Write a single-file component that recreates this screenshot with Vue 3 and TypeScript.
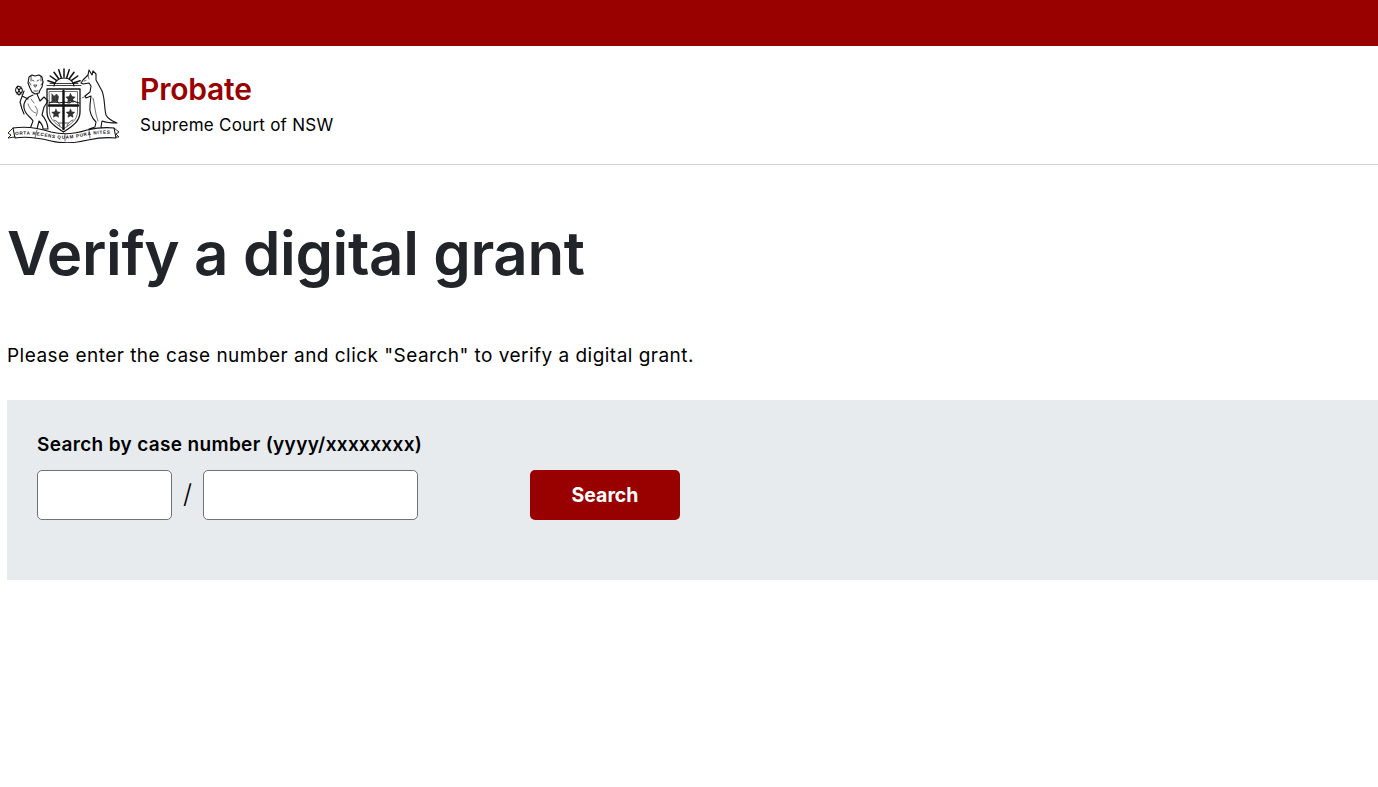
<script setup lang="ts">
import { ref } from "vue";

const caseYear = ref("");
const caseNumber = ref("");

const rays = [-72, -54, -36, -18, 0, 18, 36, 54, 72];
</script>

<template>
  <div class="page">
    <div class="top-bar"></div>

    <header class="site-header">
      <svg class="crest" viewBox="0 0 113 75" aria-label="NSW coat of arms" role="img">
        <defs>
          <path id="motto-line" d="M5 67.500C22 65 34 68 46 70c10 1.500 22 .5 32-2 10-2 20-3 31-1.500" />
        </defs>
        <g fill="none" stroke="#111" stroke-width="0.9" stroke-linecap="round" stroke-linejoin="round">
          <!-- sun -->
          <path d="M47 18a10 8 0 0 1 20 0" stroke-width="1.100" />
          <path d="M40 17.500h34M43 15.500h28" stroke-width="0.8" />
          <g v-for="r in rays" :key="r" :transform="`rotate(${r} 57 18)`">
            <path d="M57 9V1" stroke-width="1.500" />
          </g>
          <!-- shield -->
          <path d="M40 21h33v23c0 10-9 15-16.500 20C49 59 40 54 40 44z" fill="#fff" stroke-width="1.300" />
          <path d="M42.500 23.500h28V44c0 8-7.500 12.500-14 17-6.500-4.500-14-9-14-17z" stroke-width="0.6" />
          <path d="M56.500 23v38M42 37.500h29" stroke-width="2.400" />
          <path d="M42 35l6-2 4 2 5-1 5 1 4-2 6 2" stroke-width="1.200" />
          <path d="M45 26l2 2.500 2.500-2.500 2 2.500-1 6h-5.500zM47 28v5M50 28v5" fill="#444" stroke-width="0.5" />
          <path d="M63.500 25.500l1.500 3 3.200.5-2.300 2.300.5 3.200-2.900-1.500-2.900 1.500.5-3.200-2.300-2.300 3.200-.5z" fill="#333" stroke-width="0.4" />
          <path d="M49 41l1.300 2.800 3 .4-2.200 2.100.5 3-2.600-1.400-2.600 1.400.5-3-2.200-2.100 3-.4z" fill="#333" stroke-width="0.4" />
          <path d="M63.500 41l1.300 2.800 3 .4-2.200 2.100.5 3-2.600-1.400-2.600 1.400.5-3-2.200-2.100 3-.4z" fill="#333" stroke-width="0.4" />
          <path d="M47 52c3 1 5 3 6 6M66 52c-3 1-5 3-6 6M52 55h9" stroke-width="0.7" />
          <!-- lion -->
          <path d="M22 9l3-2 3 1 4-1 3 2 1 5-1 5-2 3-1 3-4 1-3-2-2-4-2-5z" fill="#fff" stroke-width="1.100" />
          <path d="M25 12l2 1M32 12l-2 1M27 17h3l-1.500 2zM24 8v5M34 8v5M22 14l2 3M36 14l-2 3M27 23h4" stroke-width="0.7" />
          <path d="M26 27c-6 2-10 7-9 13 1 7 7 9 9 13l-3 8h7l2-8c2 2 4 5 4 8h5c0-5-3-11-6-14l2-8 4-6-4-4-4 4-3-7" stroke-width="1.100" />
          <path d="M17 23l-4 11 2 7 2 5M11 18c-2 1-3 4-2 6l3 3 3-3c1-2 0-5-4-6zM10 19l4 7M14 19l-4 7M15 28l6 3" stroke-width="1.100" />
          <path d="M28 38c3 3 3 7 1 10M21 36c2 5 4 8 8 9M24 31l3 4" stroke-width="0.6" />
          <!-- kangaroo -->
          <path d="M82 2l-1 5-5 5-2 3 2 1 6-1 2 3-1 6-5 4 1 2 5-2-1 9c-1 8 2 13 6 17l-1 5-6 2h14l-2-2 1-6c5 2 11 2 15 2-5-2-9-4-11-8-2-8-1-17-4-24l-6-11 0-6-3-3-1 4z" fill="#fff" stroke-width="1.100" />
          <path d="M86 30c2 8 2 15 5 23M79 28l-4 2M81 7l1 4M77 13l2-.5" stroke-width="0.6" />
          <!-- scroll -->
          <path d="M6 60c13-2 26 0 38 4 12 3 24 2 36-2 9-2 18-3 27-2l2 10c-10-1-19 0-28 2-12 3-24 4-37 1-12-3-24-5-36-3z" fill="#fff" stroke-width="1.100" />
          <path d="M6 60l-5 5 3 2-3 3 7-1M107 60l5 4-3 2 3 3-3 0" stroke-width="0.9" />
          <path d="M30 62l-2 8M58 66v7M82 62l1 8" stroke-width="0.6" />
        </g>
        <text class="motto">
          <textPath href="#motto-line" startOffset="3">ORTA RECENS QUAM PURA NITES</textPath>
        </text>
      </svg>
      <div class="brand">
        <h2 class="brand-title">Probate</h2>
        <p class="brand-sub">Supreme Court of NSW</p>
      </div>
    </header>

    <main class="content">
      <h1 class="page-title">Verify a digital grant</h1>
      <p class="intro">Please enter the case number and click "Search" to verify a digital grant.</p>

      <form class="search-panel" @submit.prevent>
        <label class="search-label" for="case-year">Search by case number (yyyy/xxxxxxxx)</label>
        <div class="search-row">
          <input id="case-year" v-model="caseYear" class="field field-year" type="text" />
          <span class="slash">/</span>
          <input v-model="caseNumber" class="field field-number" type="text" />
          <button class="search-btn" type="submit">Search</button>
        </div>
      </form>
    </main>
  </div>
</template>

<style>
html,
body {
  background: #fff;
}
</style>

<style scoped>
.page {
  font-family: Inter, "Liberation Sans", sans-serif;
  color: #000;
  min-height: 787px;
}

.top-bar {
  height: 46px;
  background: #990000;
}

.site-header {
  display: flex;
  align-items: flex-start;
  height: 119px;
  padding: 22px 0 0 7px;
  box-sizing: border-box;
  border-bottom: 1px solid #d3d3d3;
}

.crest {
  width: 113px;
  height: 75px;
  flex: none;
}

.motto {
  font-family: "Liberation Sans", sans-serif;
  font-size: 4.600px;
  font-weight: 700;
  letter-spacing: 0.7px;
  fill: #111;
}

.brand {
  margin-left: 20px;
}

.brand-title {
  margin: 0;
  font-size: 30px;
  line-height: 44px;
  font-weight: 600;
  letter-spacing: -0.2px;
  color: #990000;
  transform: translateY(-1px);
}

.brand-sub {
  margin: 1px 0 0;
  font-size: 17px;
  line-height: 24px;
  letter-spacing: 0.25px;
  color: #000;
}

.content {
  padding: 0 0 0 7px;
}

.page-title {
  margin: 48px 0 0;
  font-size: 60px;
  line-height: 80px;
  font-weight: 600;
  letter-spacing: -0.35px;
  color: #212529;
}

.intro {
  margin: 50px 0 0;
  font-size: 19px;
  line-height: 26px;
  letter-spacing: 0.47px;
}

.search-panel {
  margin-top: 31px;
  height: 180px;
  box-sizing: border-box;
  padding: 32px 30px 0;
  background: #e7ebee;
}

.search-label {
  display: block;
  font-size: 19px;
  line-height: 26px;
  font-weight: 600;
  letter-spacing: 0.34px;
}

.search-row {
  display: flex;
  align-items: center;
  margin-top: 12px;
}

.field {
  height: 50px;
  box-sizing: border-box;
  border: 1px solid #6c757d;
  border-radius: 5px;
  background: #fff;
  padding: 0 10px;
  font: inherit;
}

.field-year {
  width: 135px;
}

.field-number {
  width: 215px;
}

.slash {
  width: 31px;
  text-align: center;
  font-size: 26px;
  font-weight: 300;
  margin-top: -4px;
}

.search-btn {
  width: 150px;
  height: 50px;
  margin-left: 112px;
  border: 0;
  border-radius: 5px;
  background: #990000;
  color: #fff;
  font-family: inherit;
  font-size: 19.500px;
  font-weight: 700;
  cursor: pointer;
}
</style>
